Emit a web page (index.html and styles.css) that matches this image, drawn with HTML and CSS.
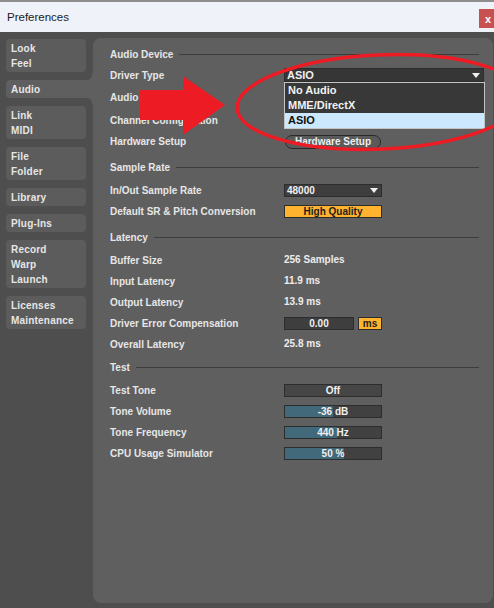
FILE: index.html
```html
<!DOCTYPE html>
<html>
<head>
<meta charset="utf-8">
<link rel="stylesheet" href="styles.css">
</head>
<body>
<div class="window">
  <div class="titlebar">
    <span class="title">Preferences</span>
    <span class="close">x</span>
  </div>
  <div class="main">
    <nav class="tabs">
      <div class="tab">Look<br>Feel</div>
      <div class="tab active">Audio</div>
      <div class="tab">Link<br>MIDI</div>
      <div class="tab">File<br>Folder</div>
      <div class="tab">Library</div>
      <div class="tab">Plug-Ins</div>
      <div class="tab">Record<br>Warp<br>Launch</div>
      <div class="tab">Licenses<br>Maintenance</div>
    </nav>
    <section class="panel">
      <div class="sec sec-audio">
        <div class="sec-head">Audio Device</div>
        <div class="rows">
          <div class="label">Driver Type</div>
          <div class="box select driver"><span>ASIO</span><span class="caret"></span>
            <div class="dropdown-list">
              <div class="opt">No Audio</div>
              <div class="opt">MME/DirectX</div>
              <div class="opt sel">ASIO</div>
            </div>
          </div>
          <div class="label">Audio Device</div>
          <div></div>
          <div class="label">Channel Configuration</div>
          <div></div>
          <div class="label">Hardware Setup</div>
          <div class="pill">Hardware Setup</div>
        </div>
      </div>
      <div class="sec">
        <div class="sec-head">Sample Rate</div>
        <div class="rows">
          <div class="label">In/Out Sample Rate</div>
          <div class="box select"><span>48000</span><span class="caret"></span></div>
          <div class="label">Default SR &amp; Pitch Conversion</div>
          <div class="box orange">High Quality</div>
        </div>
      </div>
      <div class="sec">
        <div class="sec-head">Latency</div>
        <div class="rows">
          <div class="label">Buffer Size</div>
          <div class="value">256 Samples</div>
          <div class="label">Input Latency</div>
          <div class="value">11.9 ms</div>
          <div class="label">Output Latency</div>
          <div class="value">13.9 ms</div>
          <div class="label">Driver Error Compensation</div>
          <div class="pair"><div class="box num">0.00</div><div class="box orange unit">ms</div></div>
          <div class="label">Overall Latency</div>
          <div class="value">25.8 ms</div>
        </div>
      </div>
      <div class="sec sec-test">
        <div class="sec-head">Test</div>
        <div class="rows">
          <div class="label">Test Tone</div>
          <div class="box toggle">Off</div>
          <div class="label">Tone Volume</div>
          <div class="box bar" style="--v:50%">-36 dB</div>
          <div class="label">Tone Frequency</div>
          <div class="box bar" style="--v:54%">440 Hz</div>
          <div class="label">CPU Usage Simulator</div>
          <div class="box bar" style="--v:61%">50 %</div>
        </div>
      </div>
    </section>
  </div>
  <svg class="annot" viewBox="0 0 494 608" xmlns="http://www.w3.org/2000/svg">
    <polygon points="140,90 183,90 183,76 225,105 183,135 183,120 140,120" fill="#ed1c24"/>
    <ellipse cx="380" cy="102" rx="143" ry="47" fill="none" stroke="#ed1c24" stroke-width="3.5" transform="rotate(-2.5 380 102)"/>
  </svg>
</div>
</body>
</html>
```
FILE: styles.css
```css
* { box-sizing: border-box; }
html, body { margin: 0; padding: 0; }
body {
  width: 494px;
  height: 608px;
  overflow: hidden;
  background: #4e4e4e;
  font-family: "Liberation Sans", Arial, sans-serif;
}
.window {
  position: relative;
  width: 494px;
  height: 608px;
  display: flex;
  flex-direction: column;
}
.titlebar {
  height: 32px;
  flex: none;
  background: #eff2f8;
  border-top: 2px solid #8e8e8e;
  display: flex;
  align-items: flex-start;
  justify-content: space-between;
}
.title {
  font-size: 11.5px;
  color: #1b1b1b;
  margin: 8px 0 0 7px;
  line-height: 14px;
}
.close {
  width: 15px;
  height: 19px;
  margin-top: 7px;
  background: #c75050;
  color: #fff;
  font-weight: bold;
  font-size: 11px;
  display: flex;
  align-items: center;
  justify-content: center;
  padding-left: 3px;
}
.main {
  flex: 1;
  display: flex;
  padding: 6px 2px 5px 6px;
}
.tabs {
  width: 80px;
  flex: none;
  display: flex;
  flex-direction: column;
  gap: 8px;
  padding-top: 1px;
}
.tab {
  background: #5c5c5c;
  border-radius: 4px;
  padding: 2px 0 1px 5px;
  font-size: 10px;
  font-weight: bold;
  line-height: 15px;
  color: #e6e6e6;
  letter-spacing: 0.2px;
}
.tab.active {
  background: #5f5f5f;
  margin-right: -7px;
  border-radius: 4px 0 0 4px;
  position: relative;
}
.tab.active::before,
.tab.active::after {
  content: "";
  position: absolute;
  right: 0;
  width: 7px;
  height: 6px;
}
.tab.active::before {
  bottom: 100%;
  background: radial-gradient(circle at 0 0, transparent 6px, #5f5f5f 6.5px);
}
.tab.active::after {
  top: 100%;
  background: radial-gradient(circle at 0 100%, transparent 6px, #5f5f5f 6.5px);
}
.panel {
  flex: 1;
  margin-left: 7px;
  background: #5f5f5f;
  border-radius: 8px;
  padding: 6px 9px 0 17px;
}
.sec + .sec { margin-top: 5px; }
.sec.sec-test { margin-top: 2px; }
.sec-head {
  height: 20px;
  display: flex;
  align-items: center;
  gap: 6px;
  font-size: 10px;
  font-weight: bold;
  color: #e6e6e6;
}
.sec-head::after {
  content: "";
  flex: 1;
  height: 1px;
  background: #3d3d3d;
  margin-right: 5px;
}
.rows {
  display: grid;
  grid-template-columns: 174px 1fr;
  grid-auto-rows: 21px;
  align-items: center;
  margin-top: 3px;
}
.sec-audio .rows {
  grid-template-rows: 22px 23px 22px 21px;
  margin-top: 0;
}
.label {
  font-size: 10px;
  font-weight: bold;
  color: #e6e6e6;
  white-space: nowrap;
}
.value {
  font-size: 10px;
  font-weight: bold;
  color: #ececec;
  margin-top: -3px;
}
.box {
  width: 98px;
  height: 13px;
  border: 1px solid #2d2d2d;
  background: #3e3e3e;
  color: #f0f0f0;
  font-size: 10px;
  font-weight: bold;
  line-height: 11px;
  text-align: center;
  white-space: nowrap;
}
.select {
  display: flex;
  align-items: center;
  justify-content: space-between;
  padding: 0 3px 0 2px;
  text-align: left;
}
.caret {
  width: 0;
  height: 0;
  border-left: 4px solid transparent;
  border-right: 4px solid transparent;
  border-top: 5px solid #f0f0f0;
}
.driver {
  width: 200px;
  height: 14px;
  background: #363636;
  font-size: 11px;
  position: relative;
}
.dropdown-list {
  position: absolute;
  top: calc(100% + 1px);
  left: -1px;
  width: 201px;
  border: 1px solid #c4c4c4;
  background: #383838;
  z-index: 2;
}
.opt {
  height: 15px;
  line-height: 15px;
  padding-left: 3px;
  font-size: 11px;
  font-weight: bold;
  color: #f2f2f2;
}
.opt.sel {
  background: #cce8ff;
  color: #111;
}
.pill {
  width: 96px;
  height: 14px;
  margin-left: 1px;
  border-radius: 7px;
  border: 1px solid #2a2a2a;
  background: #5a5a5a;
  color: #eeeeee;
  font-size: 10px;
  font-weight: bold;
  line-height: 12px;
  text-align: center;
}
.orange {
  background: #ffb32e;
  color: #1e1e1e;
}
.pair {
  display: flex;
  gap: 4px;
}
.num { width: 70px; }
.unit { width: 24px; }
.toggle { background: #464646; }
.bar {
  background: linear-gradient(to right, #42697a var(--v), #414141 var(--v));
}
.annot {
  position: absolute;
  left: 0;
  top: 0;
  width: 494px;
  height: 608px;
  pointer-events: none;
  z-index: 5;
}
```
